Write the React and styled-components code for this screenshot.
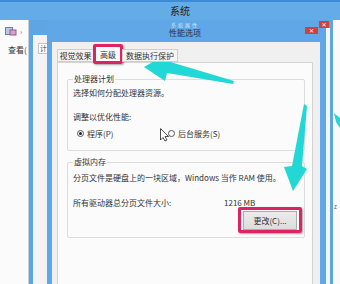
import React from "react";
import styled, { createGlobalStyle } from "styled-components";

const Global = createGlobalStyle`
  html, body { margin: 0; padding: 0; background: #fff; }
  * { box-sizing: border-box; }
`;

const FONT = `"Noto Sans CJK SC", "Liberation Sans", sans-serif`;

const Screen = styled.div`
  width: 340px;
  height: 284px;
  position: relative;
  overflow: hidden;
  display: flex;
  flex-direction: column;
  background: #5fa6e4;
  font-family: ${FONT};
  color: #333;
`;

const TopBar = styled.div`
  height: 20px;
  flex: none;
  border-top: 2px solid #3e8ad3;
  background: #64ace8;
  display: flex;
  align-items: center;
  justify-content: center;
  padding-left: 20px;
  font-size: 10px;
  line-height: 12px;
  color: #222;
`;

const Desk = styled.div`
  flex: 1;
  display: flex;
  min-height: 0;
`;

const Explorer = styled.div`
  width: 29px;
  flex: none;
  background: #fbfbfb;
  border-right: 1px solid #c3cfdb;
  padding: 6px 0 0 5px;
  display: flex;
  flex-direction: column;
`;

const NavRow = styled.div`
  display: flex;
  align-items: center;
  gap: 3px;
  height: 10px;
  font-size: 7px;
  color: #666;
`;

const ViewLabel = styled.div`
  margin: 8px 0 0 3px;
  font-size: 8px;
  line-height: 11px;
  white-space: nowrap;
  color: #333;
`;

const SysWindow = styled.div`
  width: 304px;
  flex: none;
  position: relative;
  display: flex;
  padding: 0 3px 0 4px;
  background: #5ea5e3;
`;

const SysLeft = styled.div`
  width: 14px;
  flex: none;
  margin-top: 15px;
  background: #f3f3f3;
  padding: 8px 0 0 5px;
`;

const SysTab = styled.div`
  height: 11px;
  border: 1px solid #c4c4c4;
  border-right: none;
  background: #fff;
  font-size: 7px;
  line-height: 9px;
  padding-left: 1px;
  overflow: hidden;
  color: #444;
`;

const SysRight = styled.div`
  width: 4px;
  flex: none;
  margin: 8px 0 0 1px;
  background: #f4f6f8;
`;

const CloseBtn = styled.div`
  width: ${(p) => p.$w}px;
  height: 7px;
  flex: none;
  background: #c8443c;
  display: flex;
  align-items: center;
  justify-content: center;
  color: #fff;
  font-family: "DejaVu Sans", sans-serif;
  font-size: 6px;
  line-height: 7px;
  font-weight: bold;
`;

const SysClose = styled(CloseBtn)`
  position: absolute;
  left: 290px;
  top: 1px;
  z-index: 2;
`;

const PerfWindow = styled.div`
  width: 278px;
  flex: none;
  display: flex;
  flex-direction: column;
  background: #5fa7e6;
`;

const PerfTitle = styled.div`
  height: 22px;
  flex: none;
  display: flex;
  align-items: flex-start;
  padding-top: 2px;
`;

const CaptionStack = styled.div`
  flex: 1;
  display: flex;
  flex-direction: column;
  align-items: center;
  padding-left: 18px;
`;

const FaintTitle = styled.div`
  font-size: 5px;
  line-height: 6px;
  letter-spacing: 2px;
  color: #d3e6f7;
`;

const Caption = styled.div`
  font-size: 8px;
  line-height: 10px;
  color: #333;
`;

const PerfClose = styled(CloseBtn)`
  margin: 5px 7px 0 0;
`;

const PerfBody = styled.div`
  flex: 1;
  margin: 0 5px;
  background: #f0f0f0;
  padding: 4px 7px 0 5px;
  display: flex;
  flex-direction: column;
`;

const TabStrip = styled.div`
  height: 16px;
  flex: none;
  display: flex;
  align-items: flex-end;
  position: relative;
  z-index: 1;
`;

const Tab = styled.div`
  width: ${(p) => p.$w}px;
  height: ${(p) => (p.$active ? 17 : 13)}px;
  margin-bottom: ${(p) => (p.$active ? -1 : 0)}px;
  border: 1px solid #cfcfcf;
  border-bottom: ${(p) => (p.$active ? "none" : "1px solid #cfcfcf")};
  background: ${(p) => (p.$active ? "#fcfcfc" : "#f4f4f4")};
  font-size: 8px;
  line-height: 11px;
  padding-top: ${(p) => (p.$active ? 2 : 0)}px;
  text-align: center;
  white-space: nowrap;
  position: relative;
  color: #333;
`;

const Highlight = styled.div`
  position: absolute;
  top: ${(p) => p.$t}px;
  left: ${(p) => p.$l}px;
  right: ${(p) => p.$r}px;
  bottom: ${(p) => p.$b}px;
  border: 3px solid #dc2462;
  border-radius: 2px;
  box-shadow: 1px 1px 2px rgba(0, 0, 0, 0.35);
  pointer-events: none;
`;

const TabPanel = styled.div`
  flex: 1;
  border: 1px solid #d3d3d3;
  border-bottom: none;
  background: #fbfbfb;
  padding: 10px 7px 0 9px;
`;

const Group = styled.fieldset`
  margin: ${(p) => p.$mt || 0}px 0 0 0;
  padding: 0 7px ${(p) => p.$pb}px 5px;
  border: 1px solid #dcdcdc;
  border-radius: 2px;
  min-width: 0;
`;

const Legend = styled.legend`
  padding: 0 1px;
  font-size: 8px;
  line-height: 12px;
  color: #333;
`;

const Line = styled.div`
  margin-top: ${(p) => p.$mt || 0}px;
  font-size: 8px;
  line-height: 11px;
  white-space: nowrap;
  color: #333;
`;

const RadioRow = styled.div`
  margin-top: 6px;
  padding-left: 4px;
  display: grid;
  grid-template-columns: 91px auto;
  height: 11px;
`;

const Option = styled.div`
  display: flex;
  align-items: center;
  gap: 3px;
  font-size: 8px;
  line-height: 11px;
  color: #333;
`;

const Radio = styled.span`
  width: 7px;
  height: 7px;
  border-radius: 50%;
  border: 1px solid #555;
  background: #fff;
  display: flex;
  align-items: center;
  justify-content: center;
  &::after {
    content: "";
    width: 3px;
    height: 3px;
    border-radius: 50%;
    background: ${(p) => (p.$on ? "#222" : "transparent")};
  }
`;

const SizeRow = styled.div`
  margin-top: 14px;
  display: grid;
  grid-template-columns: 151px auto;
  font-size: 8px;
  line-height: 11px;
  color: #333;
  white-space: nowrap;
`;

const ButtonRow = styled.div`
  margin-top: 3px;
  display: flex;
  justify-content: flex-end;
`;

const Button = styled.div`
  width: 54px;
  height: 19px;
  position: relative;
  border: 1px solid #acacac;
  background: linear-gradient(#ececec, #dcdcdc);
  font-size: 8px;
  line-height: 17px;
  text-align: center;
  color: #333;
`;

const RightPane = styled.div`
  flex: 1;
  background: #fafafa;
  display: flex;
  flex-direction: column;
  padding: 183px 0 0 1px;
`;

const Stray = styled.div`
  font-size: 6px;
  line-height: 8px;
  color: #555;
`;

const Overlay = styled.svg`
  position: absolute;
  left: 0;
  top: 0;
  pointer-events: none;
`;

export default function App() {
  return (
    <>
      <Global />
      <Screen>
        <TopBar>系统</TopBar>
        <Desk>
          <Explorer>
            <NavRow>
              <svg width="12" height="9" viewBox="0 0 12 9">
                <rect x="0.5" y="0.5" width="7" height="7" fill="#b9c8e8" stroke="#6a7fb8" />
                <rect x="5" y="3" width="6" height="5" fill="#d7a0c8" stroke="#9a5a88" />
              </svg>
              <span>›</span>
            </NavRow>
            <ViewLabel>查看(</ViewLabel>
          </Explorer>
          <SysWindow>
            <SysLeft>
              <SysTab>计</SysTab>
            </SysLeft>
            <PerfWindow>
              <PerfTitle>
                <CaptionStack>
                  <FaintTitle>系统属性</FaintTitle>
                  <Caption>性能选项</Caption>
                </CaptionStack>
                <PerfClose $w={13}>✕</PerfClose>
              </PerfTitle>
              <PerfBody>
                <TabStrip>
                  <Tab $w={37}>视觉效果</Tab>
                  <Tab $w={28} $active>
                    高级
                    <Highlight $t={-3} $l={-2} $r={-2} $b={-1} />
                  </Tab>
                  <Tab $w={56}>数据执行保护</Tab>
                </TabStrip>
                <TabPanel>
                  <Group $pb={11}>
                    <Legend>处理器计划</Legend>
                    <Line $mt={2}>选择如何分配处理器资源。</Line>
                    <Line $mt={13}>调整以优化性能:</Line>
                    <RadioRow>
                      <Option>
                        <Radio $on />
                        程序(P)
                      </Option>
                      <Option>
                        <Radio />
                        后台服务(S)
                      </Option>
                    </RadioRow>
                  </Group>
                  <Group $mt={5} $pb={7}>
                    <Legend>虚拟内存</Legend>
                    <Line $mt={4}>分页文件是硬盘上的一块区域，Windows 当作 RAM 使用。</Line>
                    <SizeRow>
                      <span>所有驱动器总分页文件大小:</span>
                      <span>1216 MB</span>
                    </SizeRow>
                    <ButtonRow>
                      <Button>
                        更改(C)...
                        <Highlight $t={-5} $l={-6} $r={-6} $b={-4} />
                      </Button>
                    </ButtonRow>
                  </Group>
                </TabPanel>
              </PerfBody>
            </PerfWindow>
            <SysRight />
            <SysClose $w={10}>✕</SysClose>
          </SysWindow>
          <RightPane>
            <Stray>z</Stray>
          </RightPane>
        </Desk>
        <Overlay width="340" height="284" viewBox="0 0 340 284">
          <path d="M144,67 L163,56 L167,61 L234,81 L233,84 L167,73 L165,81 Z" fill="#22d8d6" />
          <path d="M304,104 L307,106 L302,166 L307,169 L293,191 L284,167 L292,166 Z" fill="#22d8d6" />
          <path d="M334,113 L340,118 L340,128 L336,122 Z" fill="#22d8d6" />
          <path d="M160.5,128.5 L160.5,140 L163,137.5 L165,141 L167,140 L165,136.5 L168.5,136.5 Z" fill="#fff" stroke="#222" strokeWidth="0.8" />
        </Overlay>
      </Screen>
    </>
  );
}
